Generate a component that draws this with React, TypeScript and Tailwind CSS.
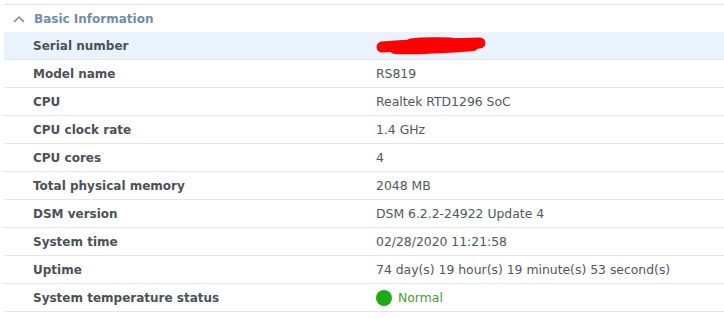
const rows: { label: string; value: string }[] = [
  { label: "Serial number", value: "" },
  { label: "Model name", value: "RS819" },
  { label: "CPU", value: "Realtek RTD1296 SoC" },
  { label: "CPU clock rate", value: "1.4 GHz" },
  { label: "CPU cores", value: "4" },
  { label: "Total physical memory", value: "2048 MB" },
  { label: "DSM version", value: "DSM 6.2.2-24922 Update 4" },
  { label: "System time", value: "02/28/2020 11:21:58" },
  { label: "Uptime", value: "74 day(s) 19 hour(s) 19 minute(s) 53 second(s)" },
  { label: "System temperature status", value: "Normal" },
];

// red marker scribble hiding the serial number
function Redacted() {
  return (
    <svg
      width="112"
      height="20"
      viewBox="0 0 112 20"
      className="block h-[20px] w-[112px] max-w-none shrink-0 -ml-[1px]"
    >
      <g fill="none" stroke="#ff0000" strokeLinecap="round">
        <path d="M7 11 C 30 9, 60 8, 105 7" strokeWidth="11" />
        <path d="M20 12 C 45 13, 70 11, 98 9" strokeWidth="12" />
        <path d="M36 8 C 50 6, 62 7, 76 7" strokeWidth="11" />
      </g>
    </svg>
  );
}

export default function App() {
  return (
    <div className="w-[724px] h-[318px] bg-white pl-1 pt-1 font-['DejaVu_Sans',sans-serif] text-[12px]">
      {/* Section header */}
      <div className="flex h-[28px] items-center border-t border-[#dfe3e8] pl-2 pt-[1px]">
        <svg width="12" height="8" viewBox="0 0 12 8" className="mr-[9px] ml-[1px]">
          <path d="M1 7 L6 2 L11 7" fill="none" stroke="#7a8a9a" strokeWidth="1.5" />
        </svg>
        <span className="font-bold text-[#6f8dab]">Basic Information</span>
      </div>

      <div>
        {rows.map((r, i) => (
          <div
            key={r.label}
            className={`flex h-[28px] items-center border-b border-[#e4e7ea] pt-[1px] ${i === 0 ? "bg-[#eaf3fd]" : ""}`}
          >
            <div className="w-[372px] shrink-0 pl-[29px] font-bold text-[#4b5158]">{r.label}</div>
            <div className="flex shrink-0 items-center text-[12.4px] text-[#505860]">
              {i === 0 ? (
                <Redacted />
              ) : r.label === "System temperature status" ? (
                <>
                  <span className="mr-[6px] h-[16px] w-[16px] rounded-full bg-[#1faa15]" />
                  <span className="text-[#4c9a3c]">{r.value}</span>
                </>
              ) : (
                r.value
              )}
            </div>
          </div>
        ))}
      </div>
    </div>
  );
}
